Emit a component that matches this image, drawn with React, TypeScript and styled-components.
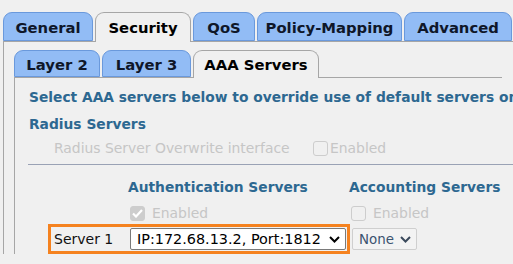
import React from "react";
import styled, { createGlobalStyle } from "styled-components";

const Global = createGlobalStyle`
  html, body { margin: 0; padding: 0; background: #f0f0f0; }
  body { font-family: "DejaVu Sans", Verdana, sans-serif; font-size: 14px; color: #000; overflow: hidden; }
`;

const Page = styled.div`
  width: 513px;
  height: 264px;
  padding: 11px 0 0 3px;
  box-sizing: border-box;
  overflow: hidden;
`;

const TabBar = styled.div<{ $h: number }>`
  display: flex;
  align-items: flex-end;
  gap: 2px;
  height: ${(p) => p.$h}px;
  border-bottom: 1px solid #a6a6a6;
`;

const Tab = styled.div<{ $active?: boolean; $w: number; $h: number }>`
  box-sizing: border-box;
  flex: none;
  width: ${(p) => p.$w}px;
  height: ${(p) => (p.$active ? p.$h + 1 : p.$h)}px;
  margin-bottom: ${(p) => (p.$active ? -1 : 0)}px;
  display: flex;
  align-items: center;
  justify-content: center;
  white-space: nowrap;
  font-weight: bold;
  font-size: 14.8px;
  color: ${(p) => (p.$active ? "#000" : "#0f1729")};
  background: ${(p) => (p.$active ? "#f0f0f0" : "#92bcf5")};
  border: 1px solid ${(p) => (p.$active ? "#a6a6a6" : "#6a99dc")};
  border-bottom: ${(p) => (p.$active ? "none" : "1px solid #6a99dc")};
  border-radius: 9px 9px 0 0;
  padding-top: ${(p) => (p.$active ? 0 : 1)}px;
`;

const OuterPanel = styled.div`
  border-left: 1px solid #a6a6a6;
  padding: 7px 0 0 10px;
  height: 212px;
  box-sizing: border-box;
`;

const InnerTabs = styled.div`
  width: 488px;
`;

const InnerPanel = styled.div`
  border-left: 1px solid #a6a6a6;
  padding: 10px 0 0 14px;
  height: 176px;
  box-sizing: border-box;
  overflow: hidden;
`;

const Heading = styled.div<{ $mt?: number }>`
  font-weight: bold;
  font-size: 13.8px;
  color: #2d6891;
  white-space: nowrap;
  line-height: 18px;
  margin-top: ${(p) => p.$mt ?? 0}px;
`;

const DisabledRow = styled.div`
  display: flex;
  align-items: center;
  color: #c6c6c6;
  font-size: 13.9px;
  height: 22px;
  margin-top: 4px;
  padding-left: 25px;
  white-space: nowrap;
`;

const Box = styled.span<{ $checked?: boolean }>`
  display: inline-flex;
  flex: none;
  align-items: center;
  justify-content: center;
  box-sizing: border-box;
  width: 15px;
  height: 15px;
  border: 1px solid #cdcdcd;
  border-radius: 3px;
  background: ${(p) => (p.$checked ? "#cdcdcd" : "transparent")};
  margin-right: 2px;
`;

const Rule = styled.div`
  height: 1px;
  background: #9aa2b5;
  margin: 5px 0 0 -1px;
`;

const ColHeads = styled.div`
  display: flex;
  padding-left: 99px;
  margin-top: 13px;
`;

const Col = styled.div<{ $w?: number }>`
  width: ${(p) => (p.$w ? `${p.$w}px` : "auto")};
`;

const EnabledLine = styled.div`
  display: flex;
  align-items: center;
  color: #c6c6c6;
  font-size: 13.9px;
  height: 18px;
  margin-top: 8px;
  padding-left: 2px;
`;

const ServerRow = styled.div`
  display: flex;
  align-items: center;
  margin: 2px 0 0 19px;
`;

const Highlight = styled.div`
  display: flex;
  align-items: center;
  box-sizing: border-box;
  width: 302px;
  height: 30px;
  border: 3px solid #f5821f;
  padding-left: 3px;
`;

const Label = styled.span`
  width: 76px;
  font-size: 14px;
  color: #111;
`;

const Select = styled.div<{ $w: number; $muted?: boolean }>`
  display: flex;
  align-items: center;
  justify-content: space-between;
  box-sizing: border-box;
  flex: none;
  width: ${(p) => p.$w}px;
  height: 22px;
  padding: 0 5px 0 6px;
  font-size: ${(p) => (p.$muted ? 13.4 : 14.4)}px;
  white-space: nowrap;
  background: ${(p) => (p.$muted ? "#f3f3f3" : "#fff")};
  border: 1px solid ${(p) => (p.$muted ? "#cfcfcf" : "#7a7a7a")};
  border-radius: 2px;
  color: ${(p) => (p.$muted ? "#3b5470" : "#000")};
  margin-left: ${(p) => (p.$muted ? 2 : 0)}px;
`;

const Chevron = ({ color = "#000" }: { color?: string }) => (
  <svg width="11" height="7" viewBox="0 0 11 7">
    <path d="M1 1l4.5 4.5L10 1" fill="none" stroke={color} strokeWidth="2" />
  </svg>
);

const Check = () => (
  <svg width="11" height="9" viewBox="0 0 11 9">
    <path d="M1 4.5l3 3L10 1" fill="none" stroke="#fff" strokeWidth="2.2" />
  </svg>
);

export default function App() {
  return (
    <Page>
      <Global />
      <TabBar $h={30}>
        <Tab $w={90} $h={29}>General</Tab>
        <Tab $w={96} $h={29} $active>Security</Tab>
        <Tab $w={62} $h={29}>QoS</Tab>
        <Tab $w={145} $h={29}>Policy-Mapping</Tab>
        <Tab $w={108} $h={29}>Advanced</Tab>
      </TabBar>
      <OuterPanel>
        <InnerTabs>
          <TabBar $h={28}>
            <Tab $w={86} $h={27}>Layer 2</Tab>
            <Tab $w={89} $h={27}>Layer 3</Tab>
            <Tab $w={126} $h={27} $active>AAA Servers</Tab>
          </TabBar>
        </InnerTabs>
        <InnerPanel>
          <Heading>Select AAA servers below to override use of default servers on</Heading>
          <Heading $mt={9}>Radius Servers</Heading>
          <DisabledRow>
            <span style={{ width: 259 }}>Radius Server Overwrite interface</span>
            <Box />
            Enabled
          </DisabledRow>
          <Rule />
          <ColHeads>
            <Col $w={221}>
              <Heading>Authentication Servers</Heading>
              <EnabledLine>
                <Box $checked>
                  <Check />
                </Box>
                <span style={{ marginLeft: 5 }}>Enabled</span>
              </EnabledLine>
            </Col>
            <Col>
              <Heading>Accounting Servers</Heading>
              <EnabledLine>
                <Box />
                <span style={{ marginLeft: 5 }}>Enabled</span>
              </EnabledLine>
            </Col>
          </ColHeads>
          <ServerRow>
            <Highlight>
              <Label>Server 1</Label>
              <Select $w={216}>
                IP:172.68.13.2, Port:1812
                <Chevron />
              </Select>
            </Highlight>
            <Select $w={65} $muted>
              None
              <Chevron color="#3b4a5c" />
            </Select>
          </ServerRow>
        </InnerPanel>
      </OuterPanel>
    </Page>
  );
}
